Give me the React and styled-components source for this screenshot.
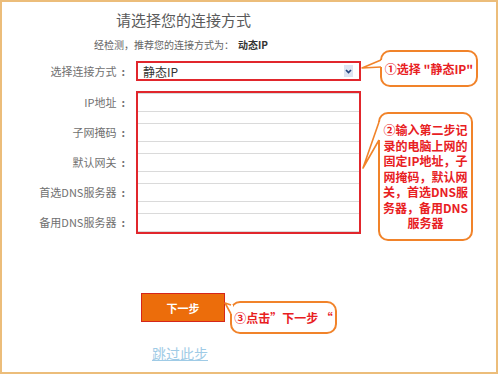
import React from "react"
import styled, {createGlobalStyle} from "styled-components"

const GlobalStyle = createGlobalStyle`
  html, body {
    margin: 0;
    padding: 0;
    background: #ffffff;
  }
  body {
    font-family: "Noto Sans CJK SC", "Noto Sans", "Liberation Sans", sans-serif;
  }
`

const inputLabels = ["IP地址", "子网掩码", "默认网关", "首选DNS服务器", "备用DNS服务器"]

const Tail = ({width, height, tip, top, bottom}) => (
    <TailSvg width={width + 4} height={height} style={{left: -(width + 2)}}>
        <polygon points={`0,${tip} ${width},${top} ${width + 3},${top} ${width + 3},${bottom} ${width},${bottom}`}
                 fill="#ffffff"/>
        <path d={`M${width + 1} ${top} L0 ${tip} L${width + 1} ${bottom}`}
              fill="none" stroke="#f1832a" strokeWidth="1.6" strokeLinejoin="round"/>
    </TailSvg>
)

const App = () => {
    return (
        <>
            <GlobalStyle/>
            <Frame>
                <Title>请选择您的连接方式</Title>
                <Detected>经检测，推荐您的连接方式为：<b>动态IP</b></Detected>

                <SelectRow>
                    <FieldLabel>选择连接方式<Colon>:</Colon></FieldLabel>
                    <Select>
                        <span>静态IP</span>
                        <Arrow>
                            <svg width="9" height="12" viewBox="0 0 9 12">
                                <path d="M2 5 L4.5 7.5 L7 5" fill="none" stroke="#24447e" strokeWidth="1.7"/>
                            </svg>
                        </Arrow>
                    </Select>
                    <Callout $width={98} $height={37} $offset={19}>
                        <Tail width={18} height={37} tip={18} top={10} bottom={17}/>
                        ①选择 "静态IP"
                    </Callout>
                </SelectRow>

                <InputsRow>
                    <LabelColumn>
                        {inputLabels.map((label) => (
                            <InputLabel key={label}>{label}<Colon>:</Colon></InputLabel>
                        ))}
                    </LabelColumn>
                    <InputGroup>
                        {inputLabels.map((label) => (
                            <TextInput key={label}/>
                        ))}
                    </InputGroup>
                    <NoteCallout>
                        <Tail width={15} height={60} tip={56} top={10} bottom={28}/>
                        ②输入第二步记<br/>
                        录的电脑上网的<br/>
                        固定IP地址，子<br/>
                        网掩码，默认网<br/>
                        关，首选DNS服<br/>
                        务器，备用DNS<br/>
                        服务器
                    </NoteCallout>
                </InputsRow>

                <ButtonRow>
                    <NextButton>下一步</NextButton>
                    <Callout $width={107} $height={33} $offset={5} $top={8}>
                        <Tail width={5} height={16} tip={2} top={4} bottom={13}/>
                        ③点击”下一步 “
                    </Callout>
                </ButtonRow>

                <SkipLink href="#">跳过此步</SkipLink>
            </Frame>
        </>
    )
}

const Frame = styled.div`
  width: 498px;
  height: 374px;
  box-sizing: border-box;
  border: 2px solid #ecbd7a;
  padding-top: 8px;
  background: #ffffff;
`

const Title = styled.h1`
  margin: 0 0 0 114px;
  font-size: 15px;
  line-height: 20px;
  font-weight: normal;
  color: #5a5a5a;
`

const Detected = styled.div`
  margin: 8px 0 0 92px;
  font-size: 10px;
  line-height: 14px;
  color: #666666;

  b {
    margin-left: 4px;
    color: #333333;
  }
`

const Row = styled.div`
  display: flex;
  align-items: flex-start;
`

const SelectRow = styled(Row)`
  margin-top: -2px;
`

const Colon = styled.span`
  display: inline-block;
  margin-left: 5px;
  font-weight: bold;
`

const FieldLabel = styled.div`
  width: 134px;
  box-sizing: border-box;
  padding-right: 11px;
  margin-top: 11px;
  text-align: right;
  font-size: 11px;
  line-height: 20px;
  color: #707070;
  white-space: nowrap;
`

const Select = styled.div`
  width: 225px;
  height: 20px;
  margin-top: 11px;
  box-sizing: border-box;
  border: 2px solid #e1262c;
  display: flex;
  align-items: center;
  justify-content: space-between;
  padding: 0 6px 0 5px;
  font-size: 12px;
  color: #333333;
`

const Arrow = styled.span`
  width: 9px;
  height: 12px;
  background: #dde4f1;
  display: flex;
`

const Callout = styled.div`
  position: relative;
  width: ${({$width}) => $width}px;
  height: ${({$height}) => $height}px;
  margin-left: ${({$offset}) => $offset}px;
  margin-top: ${({$top}) => $top || 0}px;
  box-sizing: border-box;
  border: 2px solid #f1832a;
  border-radius: 10px;
  background: #ffffff;
  display: flex;
  align-items: center;
  justify-content: center;
  font-size: 12px;
  font-weight: bold;
  color: #e8201f;
  white-space: nowrap;
`

const TailSvg = styled.svg`
  position: absolute;
  top: -2px;
  overflow: visible;
`

const InputsRow = styled(Row)`
  margin-top: 4px;
`

const LabelColumn = styled.div`
  width: 134px;
  box-sizing: border-box;
  padding: 2px 11px 0 0;
  display: flex;
  flex-direction: column;
  gap: 11px;
`

const InputLabel = styled.div`
  height: 19px;
  text-align: right;
  font-size: 11px;
  line-height: 19px;
  color: #707070;
  white-space: nowrap;
`

const InputGroup = styled.div`
  width: 225px;
  box-sizing: border-box;
  border: 2px solid #e1262c;
  display: flex;
  flex-direction: column;
  gap: 11px;
`

const TextInput = styled.input`
  display: block;
  width: 100%;
  height: 19px;
  box-sizing: border-box;
  margin: 0;
  padding: 0 4px;
  border: none;
  border-top: 1px solid #dadada;
  border-bottom: 1px solid #dadada;
  outline: none;
  background: #ffffff;
`

const NoteCallout = styled(Callout).attrs({$width: 95, $height: 129, $offset: 17, $top: 21})`
  padding: 0 3px;
  text-align: center;
  line-height: 15.5px;
`

const ButtonRow = styled(Row)`
  margin-top: 52px;
  padding-left: 139px;
`

const NextButton = styled.button`
  width: 84px;
  height: 29px;
  margin: 0;
  padding: 0;
  border: 1px solid #d5261b;
  background: #ec6d0b;
  color: #ffffff;
  font-family: inherit;
  font-size: 11px;
  font-weight: bold;
  cursor: pointer;
`

const SkipLink = styled.a`
  display: inline-block;
  margin: 10px 0 0 150px;
  font-size: 14px;
  line-height: 18px;
  color: #9fcbe6;
  text-decoration: underline;
`

export default App
